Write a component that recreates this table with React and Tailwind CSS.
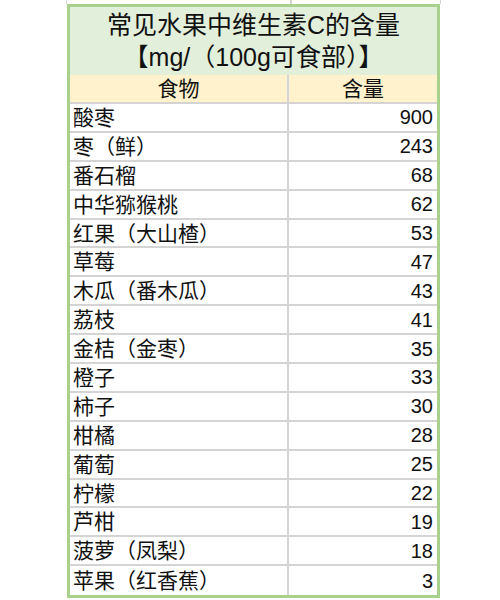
const rows = [
  ["酸枣", 900],
  ["枣（鲜）", 243],
  ["番石榴", 68],
  ["中华猕猴桃", 62],
  ["红果（大山楂）", 53],
  ["草莓", 47],
  ["木瓜（番木瓜）", 43],
  ["荔枝", 41],
  ["金桔（金枣）", 35],
  ["橙子", 33],
  ["柿子", 30],
  ["柑橘", 28],
  ["葡萄", 25],
  ["柠檬", 22],
  ["芦柑", 19],
  ["菠萝（凤梨）", 18],
  ["苹果（红香蕉）", 3],
];

export default function App() {
  return (
    <div
      className="w-[500px] h-[600px] bg-white text-[#111]"
      style={{ fontFamily: '"Liberation Sans", "Noto Sans CJK SC", sans-serif' }}
    >
      {/* spreadsheet grid stubs above the table */}
      <div className="flex h-[4px] ml-[66px]">
        <div className="w-[224px] border-l border-[#d4d4d4]" />
        <div className="w-[150px] border-l-2 border-[#d4d4d4]" />
        <div className="border-l border-[#d4d4d4]" />
      </div>

      <div className="ml-[67px] w-[373px] border-[3px] border-[#a9d18e]">
        {/* title */}
        <div className="h-[68px] bg-[#e2efda] flex flex-col items-center justify-center text-[25px] leading-[32px]">
          <div>常见水果中维生素C的含量</div>
          <div>【mg/（100g可食部）】</div>
        </div>

        {/* header */}
        <div className="flex h-[29px] bg-[#fff2cc] border-b-2 border-[#d4d4d4] text-[21px] leading-none">
          <div className="w-[219px] flex items-center justify-center border-r-2 border-[#d4d4d4]">
            食物
          </div>
          <div className="flex-1 flex items-center justify-center">含量</div>
        </div>

        {/* data rows */}
        {rows.map(([name, value], i) => (
          <div
            key={name}
            className={
              "flex h-[28.9px] " +
              (i < rows.length - 1 ? "border-b-2 border-[#d4d4d4]" : "")
            }
          >
            <div className="w-[219px] flex items-center pl-[3px] border-r-2 border-[#d4d4d4] text-[21px] leading-none">
              {name}
            </div>
            <div className="flex-1 flex items-center justify-end pr-[4px] text-[20px] leading-none">
              {value}
            </div>
          </div>
        ))}
      </div>
    </div>
  );
}
